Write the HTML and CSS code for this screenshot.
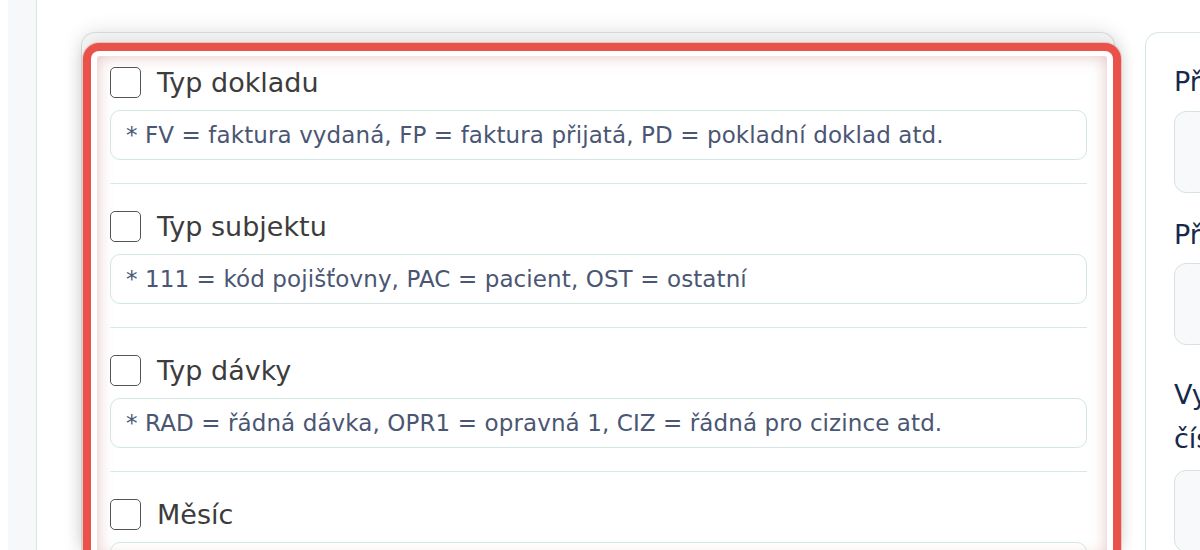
FILE: index.html
```html
<!DOCTYPE html>
<html lang="cs">
<head>
<meta charset="utf-8">
<title>Filtr dokladů</title>
<link rel="stylesheet" href="styles.css">
</head>
<body>
<div class="page">
  <aside class="sidebar"></aside>
  <section class="card">
    <div class="focus">
      <div class="panel">
        <div class="item">
          <label class="check-row"><span class="box"></span><span class="check-label">Typ dokladu</span></label>
          <div class="field">* FV = faktura vydaná, FP = faktura přijatá, PD = pokladní doklad atd.</div>
        </div>
        <div class="item">
          <label class="check-row"><span class="box"></span><span class="check-label">Typ subjektu</span></label>
          <div class="field">* 111 = kód pojišťovny, PAC = pacient, OST = ostatní</div>
        </div>
        <div class="item">
          <label class="check-row"><span class="box"></span><span class="check-label">Typ dávky</span></label>
          <div class="field">* RAD = řádná dávka, OPR1 = opravná 1, CIZ = řádná pro cizince atd.</div>
        </div>
        <div class="item">
          <label class="check-row"><span class="box"></span><span class="check-label">Měsíc</span></label>
          <div class="field"></div>
        </div>
      </div>
    </div>
  </section>
  <section class="side-card">
    <div class="side-label l1">Přijato od</div>
    <div class="side-input"></div>
    <div class="side-label l2">Přijato do</div>
    <div class="side-input"></div>
    <div class="side-label l3">Vyúčtování<br>čísla dokladu</div>
    <div class="side-input"></div>
  </section>
</div>
</body>
</html>
```

FILE: styles.css
```css
* { box-sizing: border-box; }
html, body { margin: 0; padding: 0; background: #ffffff; }
body {
  font-family: "DejaVu Sans", "Open Sans", sans-serif;
  width: 1200px;
  height: 550px;
  overflow: hidden;
}
.page {
  display: flex;
  align-items: flex-start;
  height: 550px;
}
.sidebar {
  flex: none;
  margin-left: 8px;
  width: 29px;
  height: 550px;
  background: #f6f8fa;
  border-right: 1px solid #d6e8e6;
}
.card {
  flex: none;
  margin-left: 44px;
  margin-top: 32px;
  width: 1034px;
  height: 518px;
  border: 1px solid #d9dbdb;
  border-bottom: none;
  border-radius: 14px 14px 0 0;
  background: linear-gradient(#f4f4f4, #ffffff 30px);
  padding: 10px 0 0 1px;
  box-shadow: 0 0 20px rgba(0, 0, 0, 0.12);
}
.focus {
  width: 1038px;
  height: 507px;
  border: 8px solid #e8524a;
  border-bottom: none;
  border-radius: 16px 16px 0 0;
  background: #ffffff;
  padding: 5px 6px 0 6px;
  box-shadow: 0 0 0 1px rgba(232, 82, 74, 0.25), 0 0 16px rgba(0, 0, 0, 0.14);
}
.panel {
  height: 502px;
  padding: 11px 20px 0 13px;
  border-radius: 3px 3px 0 0;
  box-shadow: inset 0 0 16px rgba(190, 110, 110, 0.42);
  background: #ffffff;
}
.item {
  border-bottom: 1px solid #d8e8e6;
  padding-bottom: 23px;
}
.item + .item {
  margin-top: 27px;
}
.check-row {
  display: flex;
  align-items: center;
  gap: 16px;
  height: 30px;
}
.box {
  flex: none;
  width: 31px;
  height: 31px;
  border: 1.6px solid #555555;
  border-radius: 5px;
  background: #ffffff;
}
.check-label {
  font-size: 27px;
  color: #3c3c3c;
}
.field {
  margin-top: 13px;
  height: 50px;
  border: 1px solid #d3e6e3;
  border-radius: 10px;
  padding: 0 15px;
  display: flex;
  align-items: center;
  font-size: 23px;
  letter-spacing: 0.1px;
  color: #4a5673;
  white-space: nowrap;
}
.side-card {
  flex: none;
  margin-left: 30px;
  margin-top: 32px;
  width: 300px;
  height: 518px;
  border: 1px solid #d8e6e5;
  border-bottom: none;
  border-radius: 14px 14px 0 0;
  padding: 29px 0 0 28px;
}
.side-label {
  font-size: 27px;
  line-height: 39px;
  color: #16294b;
  white-space: nowrap;
}
.side-label.l1 { margin-bottom: 10px; }
.side-label.l2 { margin-top: 22px; margin-bottom: 9px; }
.side-label.l3 { margin-top: 28px; margin-bottom: 9px; line-height: 44px; }
.side-input {
  height: 82px;
  width: 260px;
  border: 1px solid #d7e2e2;
  border-radius: 12px;
  background: #f7f9fa;
}
```
